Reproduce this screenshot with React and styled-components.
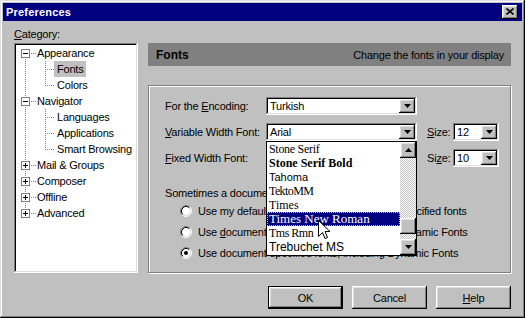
import React from "react";
import styled, { createGlobalStyle } from "styled-components";

const GlobalStyle = createGlobalStyle`
  html, body {
    margin: 0;
    padding: 0;
    background: #c0c0c0;
  }
  body {
    font-family: "Liberation Sans", Arial, sans-serif;
    font-size: 11px;
    letter-spacing: -0.2px;
    color: #000;
  }
`;

const raised = `
  box-shadow: inset -1px -1px #000, inset 1px 1px #fff, inset -2px -2px #808080, inset 2px 2px #dfdfdf;
`;

const sunken = `
  box-shadow: inset -1px -1px #fff, inset 1px 1px #808080, inset -2px -2px #dfdfdf, inset 2px 2px #000;
`;

const Window = styled.div`
  box-sizing: border-box;
  width: 525px;
  height: 318px;
  padding: 3px;
  background: #c0c0c0;
  box-shadow: inset -1px -1px #000, inset 1px 1px #dfdfdf, inset -2px -2px #808080, inset 2px 2px #fff;
  display: flex;
  flex-direction: column;
`;

const TitleBar = styled.div`
  flex: none;
  height: 18px;
  background: #000080;
  display: flex;
  align-items: center;
  justify-content: space-between;
  padding: 0 4px 0 3px;
`;

const TitleText = styled.span`
  color: #fff;
  font-weight: bold;
  font-size: 11px;
  letter-spacing: 0.2px;
`;

const CloseButton = styled.div`
  box-sizing: border-box;
  width: 16px;
  height: 14px;
  background: #c0c0c0;
  ${raised}
  display: flex;
  align-items: center;
  justify-content: center;
  padding: 0 1px 1px 0;
`;

const Body = styled.div`
  flex: 1;
  display: flex;
  flex-direction: column;
  padding: 7px 11px 0 11px;
`;

const Caption = styled.div`
  line-height: 13px;
  height: 13px;
  margin-bottom: 2px;
`;

const Main = styled.div`
  display: grid;
  grid-template-columns: 124px 363px;
  column-gap: 10px;
  height: 230px;
`;

const TreeBox = styled.div`
  box-sizing: border-box;
  height: 100%;
  background: #fff;
  padding: 2px;
  ${sunken}
`;

const TreeRow = styled.div`
  display: flex;
  align-items: center;
  height: 16px;
`;

const Guide = styled.span`
  position: relative;
  flex: none;
  width: 20px;
  height: 16px;
  &::before {
    content: "";
    display: ${(p) => (p.$up || p.$down ? "block" : "none")};
    position: absolute;
    left: 9px;
    width: 1px;
    top: ${(p) => (p.$up ? "0" : "8px")};
    bottom: ${(p) => (p.$down ? "0" : "8px")};
    background: repeating-linear-gradient(to bottom, #808080 0 1px, transparent 1px 2px);
  }
  &::after {
    content: "";
    display: ${(p) => (p.$branch ? "block" : "none")};
    position: absolute;
    left: 9px;
    top: 8px;
    width: ${(p) => p.$reach || 10}px;
    height: 1px;
    background: repeating-linear-gradient(to right, #808080 0 1px, transparent 1px 2px);
  }
`;

const Expander = styled.svg`
  position: absolute;
  left: 5px;
  top: 4px;
  z-index: 1;
`;

const TreeLabel = styled.span`
  line-height: 16px;
  height: 16px;
  margin-left: -2px;
  padding: 0 2px 0 3px;
  white-space: nowrap;
  background: ${(p) => (p.$selected ? "#c0c0c0" : "transparent")};
`;

const Pane = styled.div`
  display: flex;
  flex-direction: column;
`;

const Banner = styled.div`
  flex: none;
  height: 23px;
  background: #808080;
  display: flex;
  align-items: center;
  justify-content: space-between;
  padding: 0 7px 0 8px;
`;

const BannerTitle = styled.span`
  font-weight: bold;
  font-size: 12px;
  letter-spacing: 0;
`;

const BannerHint = styled.span`
  font-size: 11px;
`;

const GroupBox = styled.div`
  box-sizing: border-box;
  margin-top: 19px;
  height: 188px;
  border: 1px solid #808080;
  box-shadow: inset 1px 1px #fff, 1px 1px #fff;
  padding: 11px 0 0 16px;
  display: flex;
  flex-direction: column;
`;

const FieldRow = styled.div`
  display: flex;
  align-items: center;
  height: 18px;
  margin-bottom: 8px;
`;

const FieldLabel = styled.span`
  flex: none;
  width: ${(p) => p.$w}px;
  margin-left: ${(p) => p.$gap || 0}px;
  white-space: nowrap;
`;

const ComboWrap = styled.div`
  position: relative;
  flex: none;
  width: ${(p) => p.$w}px;
  height: 18px;
`;

const ComboField = styled.div`
  box-sizing: border-box;
  height: 18px;
  width: 100%;
  background: #fff;
  padding: 2px;
  ${sunken}
  display: flex;
`;

const ComboValue = styled.span`
  flex: 1;
  line-height: 14px;
  padding-left: 2px;
  white-space: nowrap;
  overflow: hidden;
`;

const ArrowButton = styled.div`
  box-sizing: border-box;
  flex: none;
  width: 16px;
  height: ${(p) => p.$h || 14}px;
  background: #c0c0c0;
  ${raised}
  display: flex;
  align-items: center;
  justify-content: center;
`;

const DropList = styled.div`
  position: absolute;
  top: 100%;
  left: 0;
  z-index: 5;
  box-sizing: border-box;
  width: 100%;
  height: 115px;
  border: 1px solid #000;
  background: #fff;
  display: flex;
`;

const Options = styled.div`
  flex: 1;
  display: flex;
  flex-direction: column;
  overflow: hidden;
`;

const Option = styled.div`
  flex: none;
  height: 14px;
  line-height: 14px;
  padding: 0 2px;
  white-space: nowrap;
  font-family: ${(p) => p.$family};
  font-size: ${(p) => p.$size}px;
  font-weight: ${(p) => p.$weight || "normal"};
  letter-spacing: ${(p) => p.$spacing || 0}px;
  background: ${(p) => (p.$active ? "#000080" : "transparent")};
  color: ${(p) => (p.$active ? "#fff" : "#000")};
  outline: ${(p) => (p.$active ? "1px dotted #c0c0c0" : "none")};
  outline-offset: -1px;
`;

const ScrollBar = styled.div`
  flex: none;
  width: 16px;
  display: flex;
  flex-direction: column;
`;

const Track = styled.div`
  flex: 1;
  display: flex;
  flex-direction: column;
  background-image: conic-gradient(#fff 25%, #c0c0c0 0 50%, #fff 0 75%, #c0c0c0 0);
  background-size: 2px 2px;
`;

const Thumb = styled.div`
  box-sizing: border-box;
  flex: none;
  height: 16px;
  margin-top: ${(p) => p.$offset}px;
  background: #c0c0c0;
  ${raised}
`;

const Pointer = styled.svg`
  position: absolute;
  left: 51px;
  top: 78px;
  z-index: 6;
`;

const Note = styled.div`
  height: 14px;
  line-height: 14px;
  margin-top: 11px;
  white-space: nowrap;
`;

const RadioRow = styled.div`
  display: flex;
  align-items: center;
  height: 21px;
  padding-left: 15px;
  white-space: nowrap;
  &:first-of-type {
    margin-top: 1px;
  }
`;

const RadioText = styled.span`
  margin-left: 6px;
`;

const ButtonRow = styled.div`
  display: flex;
  justify-content: flex-end;
  gap: 9px;
  margin-top: 13px;
`;

const PushButton = styled.div`
  box-sizing: border-box;
  width: 75px;
  height: 23px;
  background: #c0c0c0;
  display: flex;
  align-items: center;
  justify-content: center;
  border: ${(p) => (p.$default ? "1px solid #000" : "none")};
  ${raised}
`;

const Key = styled.span`
  text-decoration: underline;
`;

const DownTri = () => (
  <svg width="7" height="4" viewBox="0 0 7 4">
    <polygon points="0,0 7,0 3.5,4" fill="#000" />
  </svg>
);

const UpTri = () => (
  <svg width="7" height="4" viewBox="0 0 7 4">
    <polygon points="3.5,0 7,4 0,4" fill="#000" />
  </svg>
);

const BoxIcon = ({ open }) => (
  <Expander width="9" height="9" viewBox="0 0 9 9">
    <rect x="0.5" y="0.5" width="8" height="8" fill="#fff" stroke="#808080" />
    <line x1="2" y1="4.5" x2="7" y2="4.5" stroke="#000" />
    {!open && <line x1="4.5" y1="2" x2="4.5" y2="7" stroke="#000" />}
  </Expander>
);

const Radio = ({ checked }) => (
  <svg width="12" height="12" viewBox="0 0 12 12">
    <circle cx="6" cy="6" r="4.5" fill="#fff" />
    <path d="M2.11 9.89 A5.5 5.5 0 0 1 9.89 2.11" fill="none" stroke="#808080" />
    <path d="M9.89 2.11 A5.5 5.5 0 0 1 2.11 9.89" fill="none" stroke="#fff" />
    <path d="M2.82 9.18 A4.5 4.5 0 0 1 9.18 2.82" fill="none" stroke="#000" />
    <path d="M9.18 2.82 A4.5 4.5 0 0 1 2.82 9.18" fill="none" stroke="#dfdfdf" />
    {checked && <circle cx="6" cy="6" r="2" fill="#000" />}
  </svg>
);

const Combo = ({ width, value, children }) => (
  <ComboWrap $w={width}>
    <ComboField>
      <ComboValue>{value}</ComboValue>
      <ArrowButton>
        <DownTri />
      </ArrowButton>
    </ComboField>
    {children}
  </ComboWrap>
);

const tree = [
  { label: "Appearance", open: true, children: ["Fonts", "Colors"] },
  { label: "Navigator", open: true, children: ["Languages", "Applications", "Smart Browsing"] },
  { label: "Mail & Groups" },
  { label: "Composer" },
  { label: "Offline" },
  { label: "Advanced" },
];

const serif = '"Liberation Serif", "Times New Roman", serif';
const sans = '"Liberation Sans", Arial, sans-serif';

const fontList = [
  { name: "Stone Serif", family: serif, size: 12, spacing: -0.3 },
  { name: "Stone Serif Bold", family: serif, size: 12, weight: "bold" },
  { name: "Tahoma", family: sans, size: 11 },
  { name: "TektoMM", family: serif, size: 12, spacing: -0.6 },
  { name: "Times", family: serif, size: 12 },
  { name: "Times New Roman", family: serif, size: 13, active: true },
  { name: "Tms Rmn", family: serif, size: 12, spacing: -0.5 },
  { name: "Trebuchet MS", family: sans, size: 12 },
];

function Tree() {
  const rows = [];
  tree.forEach((node, i) => {
    const first = i === 0;
    const last = i === tree.length - 1;
    rows.push(
      <TreeRow key={node.label}>
        <Guide $up={!first} $down={!last} $branch $reach={11}>
          <BoxIcon open={node.open} />
        </Guide>
        <TreeLabel>{node.label}</TreeLabel>
      </TreeRow>
    );
    (node.children || []).forEach((child, j) => {
      const lastChild = j === node.children.length - 1;
      rows.push(
        <TreeRow key={child}>
          <Guide $up={!last} $down={!last} />
          <Guide $up $down={!lastChild} $branch $reach={10} />
          <TreeLabel $selected={child === "Fonts"}>{child}</TreeLabel>
        </TreeRow>
      );
    });
  });
  return <TreeBox>{rows}</TreeBox>;
}

function FontList() {
  return (
    <DropList>
      <Options>
        {fontList.map((f) => (
          <Option
            key={f.name}
            $family={f.family}
            $size={f.size}
            $weight={f.weight}
            $spacing={f.spacing}
            $active={f.active}
          >
            {f.name}
          </Option>
        ))}
      </Options>
      <ScrollBar>
        <ArrowButton $h={16}>
          <UpTri />
        </ArrowButton>
        <Track>
          <Thumb $offset={60} />
        </Track>
        <ArrowButton $h={16}>
          <DownTri />
        </ArrowButton>
      </ScrollBar>
      <Pointer width="13" height="20" viewBox="0 0 13 20">
        <path
          d="M0.5 0.5 L0.5 16.5 L4.5 12.5 L7 18.5 L9.5 17.5 L7 11.5 L12 11.5 Z"
          fill="#fff"
          stroke="#000"
        />
      </Pointer>
    </DropList>
  );
}

export default function App() {
  return (
    <>
      <GlobalStyle />
      <Window>
        <TitleBar>
          <TitleText>Preferences</TitleText>
          <CloseButton>
            <svg width="8" height="7" viewBox="0 0 8 7">
              <path d="M0.5 0.5 L7.5 6.5 M7.5 0.5 L0.5 6.5" stroke="#000" strokeWidth="1.6" />
            </svg>
          </CloseButton>
        </TitleBar>
        <Body>
          <Caption>
            <Key>C</Key>ategory:
          </Caption>
          <Main>
            <Tree />
            <Pane>
              <Banner>
                <BannerTitle>Fonts</BannerTitle>
                <BannerHint>Change the fonts in your display</BannerHint>
              </Banner>
              <GroupBox>
                <FieldRow>
                  <FieldLabel $w={101}>
                    For the <Key>E</Key>ncoding:
                  </FieldLabel>
                  <Combo width={151} value="Turkish" />
                </FieldRow>
                <FieldRow>
                  <FieldLabel $w={101}>
                    <Key>V</Key>ariable Width Font:
                  </FieldLabel>
                  <Combo width={151} value="Arial">
                    <FontList />
                  </Combo>
                  <FieldLabel $w={26} $gap={10}>
                    <Key>S</Key>ize:
                  </FieldLabel>
                  <Combo width={46} value="12" />
                </FieldRow>
                <FieldRow>
                  <FieldLabel $w={101}>
                    <Key>F</Key>ixed Width Font:
                  </FieldLabel>
                  <Combo width={151} value="Courier New" />
                  <FieldLabel $w={26} $gap={10}>
                    Si<Key>z</Key>e:
                  </FieldLabel>
                  <Combo width={46} value="10" />
                </FieldRow>
                <Note>Sometimes a document will provide its own fonts.</Note>
                <RadioRow>
                  <Radio />
                  <RadioText>Use my default fonts, overriding document-specified fonts</RadioText>
                </RadioRow>
                <RadioRow>
                  <Radio />
                  <RadioText>
                    Use <Key>d</Key>ocument-specified fonts, but disable Dynamic Fonts
                  </RadioText>
                </RadioRow>
                <RadioRow>
                  <Radio checked />
                  <RadioText>Use document-specified fonts, including Dynamic Fonts</RadioText>
                </RadioRow>
              </GroupBox>
            </Pane>
          </Main>
          <ButtonRow>
            <PushButton $default>OK</PushButton>
            <PushButton>Cancel</PushButton>
            <PushButton>
              <Key>H</Key>elp
            </PushButton>
          </ButtonRow>
        </Body>
      </Window>
    </>
  );
}
